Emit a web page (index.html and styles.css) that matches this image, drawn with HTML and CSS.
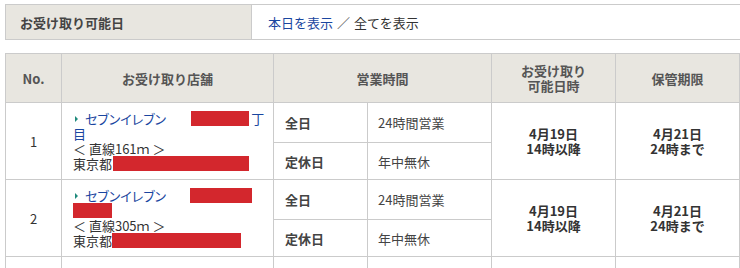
FILE: index.html
```html
<!DOCTYPE html>
<html lang="ja">
<head>
<meta charset="utf-8">
<title>お受け取り可能日</title>
<link rel="stylesheet" href="styles.css">
</head>
<body>
<div class="filter">
  <div class="filter-label">お受け取り可能日</div>
  <div class="filter-body"><a class="link" href="#">本日を表示</a><span class="sep">／</span>全てを表示</div>
</div>

<table class="stores">
  <colgroup>
    <col class="c-no"><col class="c-store"><col class="c-hlabel"><col class="c-hval"><col class="c-date"><col class="c-limit">
  </colgroup>
  <thead>
    <tr>
      <th>No.</th>
      <th>お受け取り店舗</th>
      <th colspan="2">営業時間</th>
      <th>お受け取り<br>可能日時</th>
      <th>保管期限</th>
    </tr>
  </thead>
  <tbody>
    <tr class="sub-a">
      <td rowspan="2" class="no">1</td>
      <td rowspan="2" class="store">
        <span class="tri"></span><a class="link shop" href="#">セブンイレブン</a><span class="redact r1a"></span><a class="link" href="#">丁</a><br>
        <a class="link" href="#">目</a><br>
        ＜ 直線161ｍ ＞<br>
        東京都<span class="redact r1b"></span>
      </td>
      <td class="hlabel">全日</td>
      <td class="hval">24時間営業</td>
      <td rowspan="2" class="date">4月19日<br>14時以降</td>
      <td rowspan="2" class="date">4月21日<br>24時まで</td>
    </tr>
    <tr class="sub-b">
      <td class="hlabel">定休日</td>
      <td class="hval">年中無休</td>
    </tr>
    <tr class="sub-a">
      <td rowspan="2" class="no">2</td>
      <td rowspan="2" class="store">
        <span class="tri"></span><a class="link shop" href="#">セブンイレブン</a><span class="redact r2a"></span><br>
        <span class="redact r2b"></span><br>
        ＜ 直線305ｍ ＞<br>
        東京都<span class="redact r2c"></span>
      </td>
      <td class="hlabel">全日</td>
      <td class="hval">24時間営業</td>
      <td rowspan="2" class="date">4月19日<br>14時以降</td>
      <td rowspan="2" class="date">4月21日<br>24時まで</td>
    </tr>
    <tr class="sub-b">
      <td class="hlabel">定休日</td>
      <td class="hval">年中無休</td>
    </tr>
    <tr class="empty">
      <td></td><td></td><td></td><td></td><td></td><td></td>
    </tr>
  </tbody>
</table>
</body>
</html>
```

FILE: styles.css
```css
html, body {
  margin: 0;
  padding: 0;
  background: #fff;
}
body {
  padding: 4px 0 0 5px;
  font-family: "Noto Sans CJK JP", "Noto Sans", sans-serif;
  font-size: 13px;
  color: #333;
}

.link {
  color: #1a46a0;
  text-decoration: none;
}

/* top filter bar */
.filter {
  display: flex;
  height: 34px;
  border-top: 1px solid #cbcbcb;
  border-bottom: 1px solid #cbcbcb;
  border-left: 1px solid #cbcbcb;
}
.filter-label {
  width: 231px;
  padding-left: 14px;
  background: #e8e6e0;
  border-right: 1px solid #cbcbcb;
  display: flex;
  align-items: center;
  font-weight: bold;
  color: #444;
}
.filter-body {
  flex: 1;
  padding-left: 16px;
  display: flex;
  align-items: center;
  color: #333;
}
.sep {
  margin: 0 4px;
  color: #555;
}

/* main table */
.stores {
  margin-top: 13px;
  width: 734px;
  border-collapse: collapse;
  table-layout: fixed;
}
.c-no { width: 56px; }
.c-store { width: 212px; }
.c-hlabel { width: 94px; }
.c-hval { width: 124px; }
.c-date { width: 124px; }
.c-limit { width: 124px; }

.stores th,
.stores td {
  border: 1px solid #cbcbcb;
  padding: 0;
}
.stores th {
  height: 48px;
  background: #e8e6e0;
  color: #555;
  font-weight: bold;
  line-height: 15px;
  text-align: center;
  vertical-align: middle;
}
.sub-a td { height: 39px; }
.sub-b td { height: 36px; }
.empty td { height: 30px; }

.no {
  text-align: center;
  vertical-align: middle;
  color: #333;
}
.store {
  padding: 0 4px 0 11px !important;
  line-height: 15px;
  vertical-align: middle;
  color: #333;
  white-space: nowrap;
}
.tri {
  display: inline-block;
  width: 0;
  height: 0;
  margin: 0 7px 2px 2px;
  border-left: 3px solid #1f8a7c;
  border-top: 3px solid transparent;
  border-bottom: 3px solid transparent;
  vertical-align: middle;
}
.shop {
  font-feature-settings: "palt";
}
.redact {
  display: inline-block;
  height: 15px;
  background: #d3272d;
  vertical-align: top;
}
.r1a { width: 58px; margin-left: 25px; margin-right: 2px; }
.r1b { width: 136px; margin-left: 1px; }
.r2a { width: 62px; margin-left: 24px; }
.r2b { width: 39px; }
.r2c { width: 129px; }

.hlabel {
  padding-left: 11px !important;
  font-weight: bold;
  color: #444;
  vertical-align: middle;
}
.hval {
  padding-left: 10px !important;
  color: #444;
  vertical-align: middle;
}
.date {
  text-align: center;
  vertical-align: middle;
  font-weight: bold;
  line-height: 15px;
  color: #333;
}
```
